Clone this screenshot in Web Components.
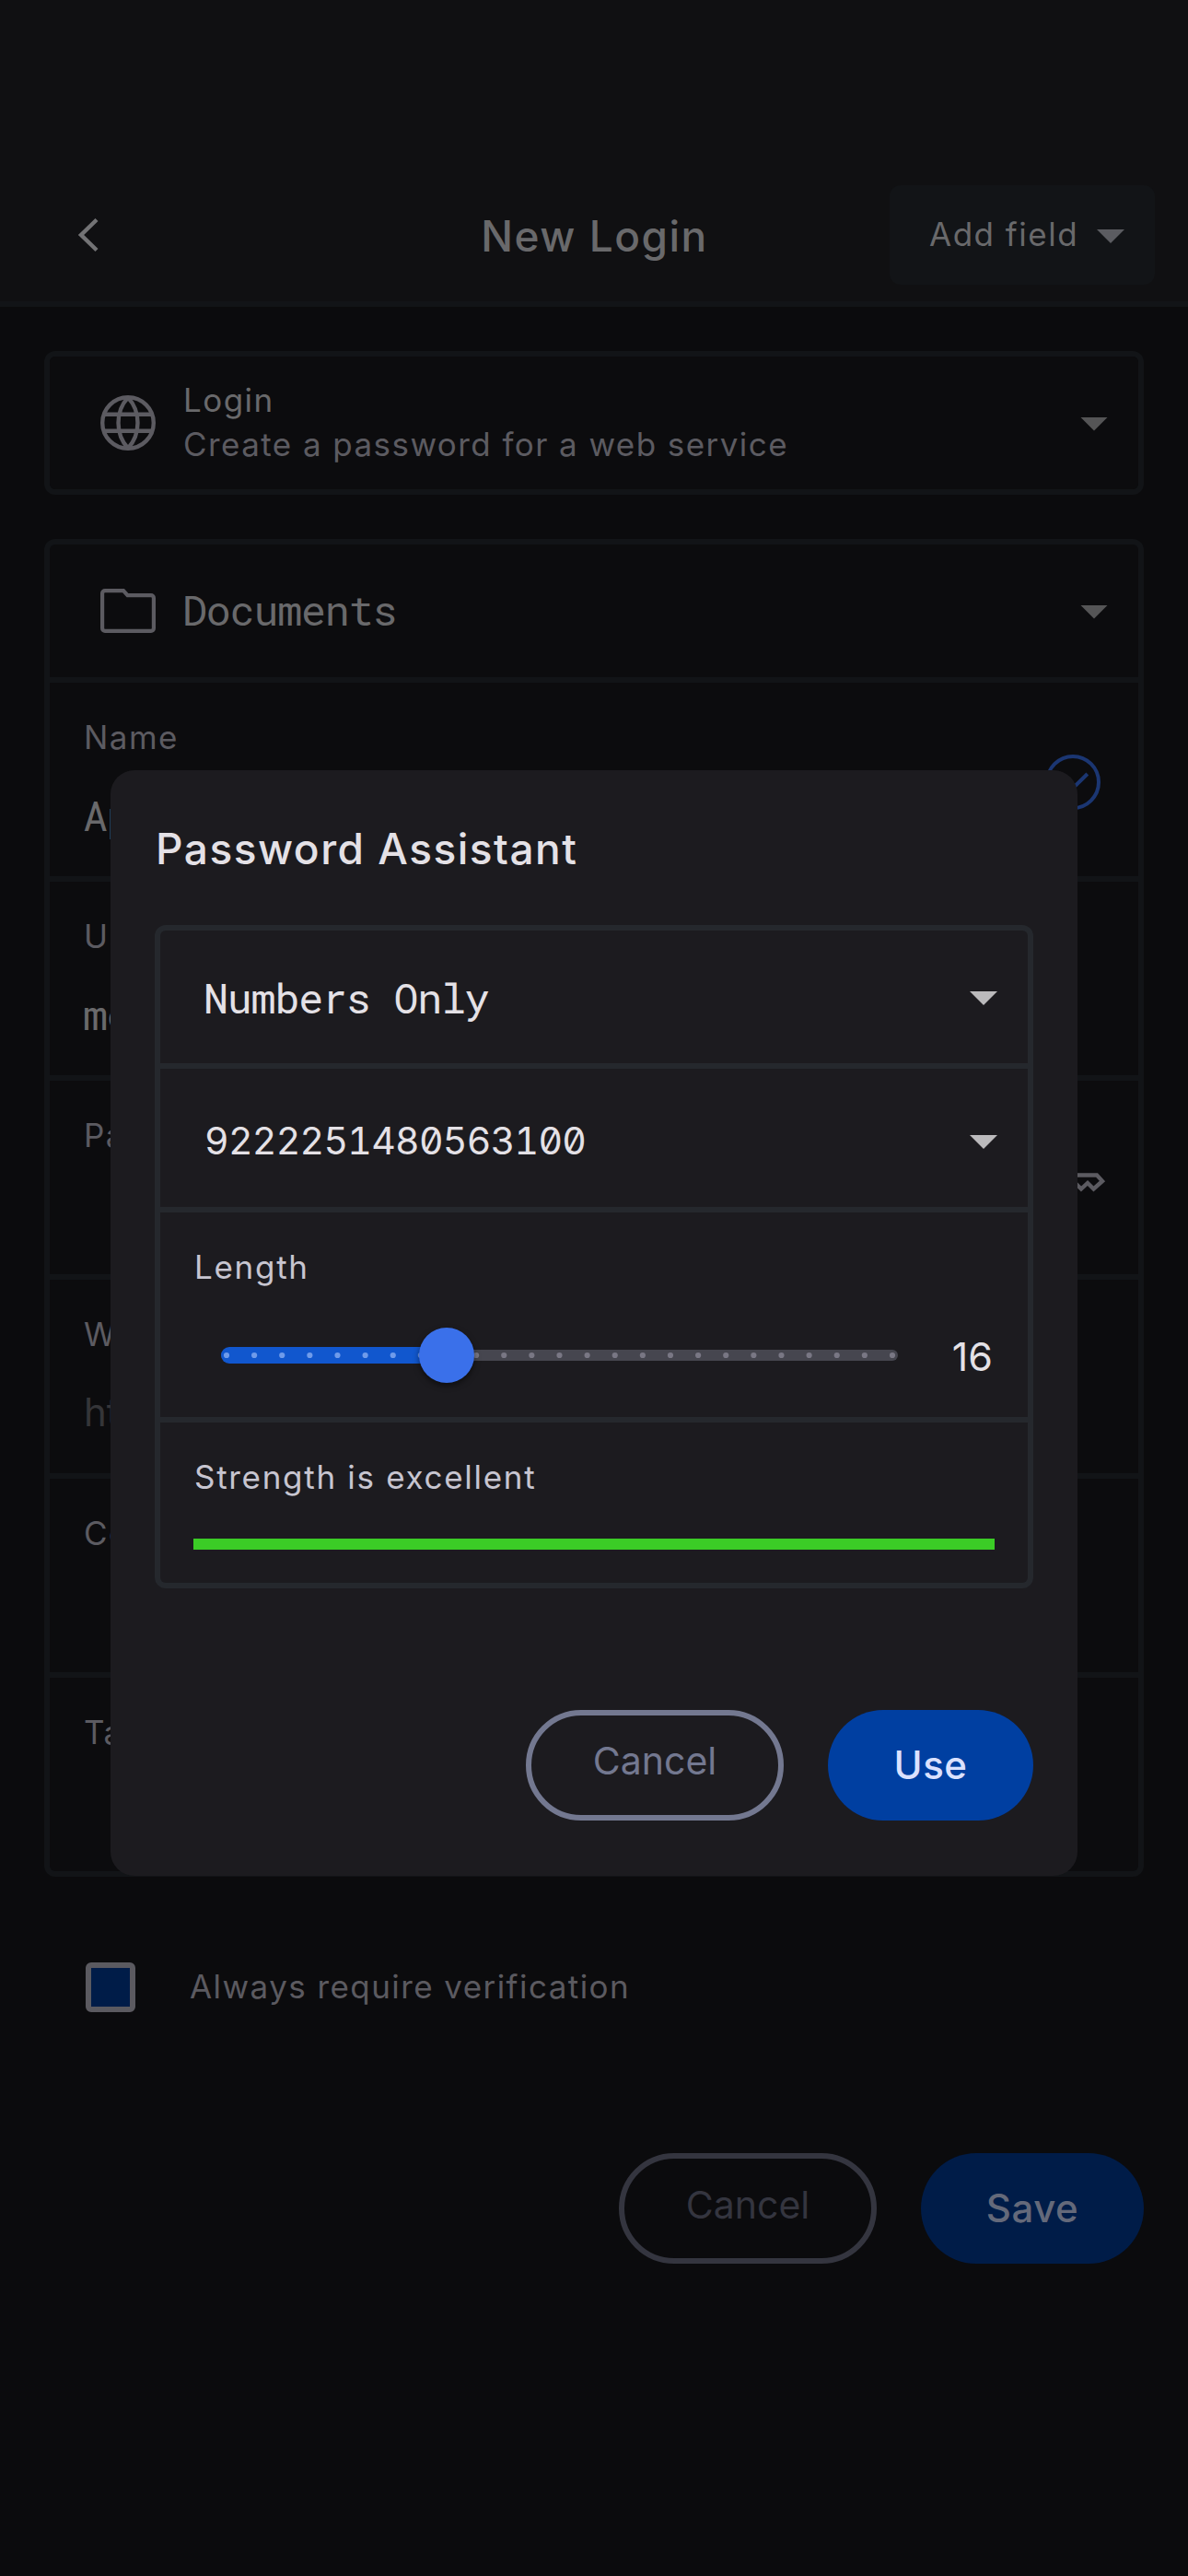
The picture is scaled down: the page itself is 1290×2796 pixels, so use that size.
<!DOCTYPE html>
<html lang="en">
<head>
<meta charset="utf-8">
<title>New Login</title>
<style>
  body {
    margin: 0;
    background: #0b0b0d;
    font-family: Inter, "Liberation Sans", sans-serif;
  }
</style>
</head>
<body>
<login-page></login-page>

<script>
const icons = {
  back: '<svg width="24" height="40" viewBox="0 0 24 40" fill="none" stroke="currentColor" stroke-width="4.4"><path d="M21 3.5 4 20l17 16.5"/></svg>',
  globe: '<svg width="60" height="60" viewBox="0 0 60 60" fill="none" stroke="currentColor" stroke-width="4.4"><circle cx="30" cy="30" r="27.8"/><path d="M4 20.800h52M4 38.800h52M30 2.500c-14 15-14 40 0 55M30 2.500c14 15 14 40 0 55"/></svg>',
  folder: '<svg width="60" height="48" viewBox="0 0 60 48" fill="none" stroke="currentColor" stroke-width="4.2"><path d="M5 2.1h20l4.5 5H55a2.9 2.9 0 0 1 2.9 2.9v33a2.9 2.9 0 0 1-2.9 2.9H5A2.9 2.9 0 0 1 2.1 43V5A2.9 2.9 0 0 1 5 2.1z"/></svg>',
  check: '<svg width="60" height="60" viewBox="0 0 60 60" fill="none" stroke="currentColor" stroke-width="4"><circle cx="30" cy="30" r="28"/><path d="M14 31l10.500 11L45.800 21"/></svg>',
  key: '<svg width="66" height="36" viewBox="0 0 66 36" fill="none" stroke="currentColor" stroke-width="4.4"><circle cx="12" cy="18" r="9"/><path d="M20 11.500h35l6 6.500-9.500 8.500-6.500-6.500-7 6.500-6.500-6.500H20"/></svg>'
};

const define = (name, html) => {
  const template = document.createElement('template');
  template.innerHTML = html;
  customElements.define(name, class extends HTMLElement {
    constructor() {
      super();
      this.attachShadow({ mode: 'open' });
      this.shadowRoot.appendChild(template.content.cloneNode(true));
    }
  });
};

class AppIcon extends HTMLElement {
  constructor() {
    super();
    this.attachShadow({ mode: 'open' });
  }
  connectedCallback() {
    this.shadowRoot.innerHTML = `
      <style>:host { display: block; flex: none; } svg { display: block; }</style>
      ${icons[this.getAttribute('name')]}`;
  }
}
customElements.define('app-icon', AppIcon);

define('drop-caret', /*html*/`
  <style>
    :host { display: block; flex: none; width: 30px; height: 15px; background: currentColor; clip-path: polygon(0 0, 100% 0, 50% 100%); }
  </style>
`);

define('mono-text', /*html*/`
  <style>
    :host {
      display: block;
      font: 45px/60px "Roboto Mono", "Liberation Mono", monospace;
      letter-spacing: -1.2px;
      margin-left: -1px;
      white-space: nowrap;
    }
    :host([digits]) {
      font: 41px/60px Inter, sans-serif;
      font-feature-settings: "tnum", "zero";
      letter-spacing: -0.7px;
      padding-bottom: 2px;
      margin-left: 0;
    }
  </style>
  <slot></slot>
`);

define('small-text', /*html*/`
  <style>
    :host { display: block; font-size: 35px; line-height: 48px; letter-spacing: 1.43px; white-space: nowrap; }
  </style>
  <slot></slot>
`);

define('app-bar', /*html*/`
  <style>
    :host {
      display: grid;
      grid-template-columns: 1fr auto 1fr;
      align-items: center;
      height: 144px;
      padding: 183px 36px 0 84px;
      border-bottom: 6px solid #121417;
      background: #101012;
      color: #69696b;
    }
    h1 { margin: 0; font-size: 46px; font-weight: 500; line-height: 60px; letter-spacing: 1.5px; padding: 2px 47px 0 0; }
    .end { justify-self: end; }
    app-icon { color: #737375; }
  </style>
  <app-icon name="back"></app-icon>
  <h1><slot></slot></h1>
  <div class="end"><slot name="end"></slot></div>
`);

define('menu-button', /*html*/`
  <style>
    :host {
      display: flex;
      align-items: center;
      justify-content: space-between;
      box-sizing: border-box;
      width: 288px;
      height: 108px;
      padding: 0 33px 0 43px;
      border-radius: 12px;
      background: #121417;
    }
    small-text { padding-bottom: 3px; letter-spacing: 1.5px; }
    drop-caret { margin-top: 3px; color: #5b5c61; }
  </style>
  <small-text><slot></slot></small-text>
  <drop-caret></drop-caret>
`);

// bordered group, rows are split by the border colour
define('row-group', /*html*/`
  <style>
    :host {
      display: flex;
      flex-direction: column;
      gap: 6px;
      border: 6px solid var(--line);
      border-radius: 12px;
      background: var(--line);
      overflow: hidden;
    }
    ::slotted(*) { background: var(--fill); }
  </style>
  <slot></slot>
`);

define('select-row', /*html*/`
  <style>
    :host { display: flex; align-items: center; box-sizing: border-box; height: 144px; padding: 0 33px 0 55px; color: #5c5b61; }
    .text { flex: 1; margin: -2px 0 0 30px; }
    drop-caret { margin-top: 2px; color: var(--caret, #555556); }
    :host([plain]) { padding: 2px 33px 0 48px; color: inherit; }
    :host([plain]) .text { margin: 0; }
  </style>
  <slot name="icon"></slot>
  <div class="text"><slot></slot></div>
  <drop-caret></drop-caret>
`);

define('field-row', /*html*/`
  <style>
    :host { display: flex; align-items: center; justify-content: space-between; height: 210px; color: #5c5b61; }
    .text { align-self: flex-start; padding: 35px 0 0 37px; }
    .value { margin-top: 31px; color: #69696b; font-size: 42px; line-height: 60px; }
  </style>
  <div class="text">
    <small-text><slot name="label"></slot></small-text>
    <div class="value"><slot></slot></div>
  </div>
  <slot name="icon"></slot>
`);

define('check-line', /*html*/`
  <style>
    :host { display: flex; align-items: center; gap: 59px; height: 54px; padding-left: 45px; color: #5b5a60; }
    .box { box-sizing: border-box; width: 54px; height: 54px; border: 6px solid #5b5a60; border-radius: 6px; background: #001c48; }
    small-text { padding-bottom: 2px; }
  </style>
  <div class="box"></div>
  <small-text><slot></slot></small-text>
`);

define('pill-button', /*html*/`
  <style>
    :host {
      display: flex;
      align-items: center;
      justify-content: center;
      box-sizing: border-box;
      height: 120px;
      border-radius: 60px;
      font-size: 42px;
      font-weight: 500;
      line-height: 60px;
      letter-spacing: 0.5px;
    }
    :host([outline]) { width: 280px; padding: 0 0 9px; border: 6px solid; font-size: 41px; font-weight: 400; letter-spacing: 0; }
  </style>
  <slot></slot>
`);

class LengthSlider extends HTMLElement {
  constructor() {
    super();
    this.attachShadow({ mode: 'open' });
  }

  connectedCallback() {
    const min = parseInt(this.getAttribute('min'), 10);
    const max = parseInt(this.getAttribute('max'), 10);
    const value = parseInt(this.getAttribute('value'), 10);
    const width = 735;
    const x = width * (value - min) / (max - min);
    let ticks = '';
    for (let i = min; i <= max; i++) {
      const cx = 6 + (width - 12) * (i - min) / (max - min);
      ticks += `<circle cx="${cx}" cy="36" r="3.1" fill="${i < value ? '#6f9bea' : '#797784'}"/>`;
    }
    this.shadowRoot.innerHTML = /*html*/`
      <style>
        :host { display: flex; align-items: center; justify-content: space-between; }
        svg { display: block; overflow: visible; }
        .thumb { filter: drop-shadow(0 3px 3px rgba(0, 0, 0, .5)); }
        span { padding-top: 2px; font-size: 43px; line-height: 60px; color: #e4e1e6; }
      </style>
      <svg width="${width}" height="72">
        <rect y="30" width="${width}" height="12" rx="6" fill="#46464f"/>
        <rect y="27" width="${x}" height="18" rx="9" fill="#1157ce"/>
        ${ticks}
        <circle class="thumb" cx="${x}" cy="36" r="30" fill="#3a70ea"/>
      </svg>
      <span>${value}</span>
    `;
  }
}
customElements.define('length-slider', LengthSlider);

define('password-assistant', /*html*/`
  <style>
    :host {
      --line: #25282d;
      --fill: #1c1b1f;
      --caret: #bbbabc;
      display: block;
      box-sizing: border-box;
      width: 1050px;
      height: 1200px;
      padding: 54px 48px 0;
      border-radius: 26px;
      background: #1c1b1f;
      color: #e4e1e6;
    }
    h2 { margin: 0 0 53px; padding-top: 1px; font-size: 46px; font-weight: 500; line-height: 60px; letter-spacing: 1.5px; text-indent: 1px; }
    .second { height: 150px; padding-top: 8px; }
    .length { height: 222px; padding: 0 38px 0 36px; box-sizing: border-box; }
    .strength { height: 174px; padding: 0 36px; box-sizing: border-box; }
    small-text { color: #c7c5d0; padding: 35px 0 0 1px; letter-spacing: 1.7px; }
    length-slider { margin: 36px 0 0 30px; }
    .bar { height: 12px; margin-top: 43px; background: #3bcc26; }
    .actions { display: flex; justify-content: flex-end; gap: 48px; margin-top: 132px; }
    .cancel { color: #737890; }
    .use { width: 223px; background: #003fa1; color: #dbe1ff; }
  </style>
  <h2>Password Assistant</h2>
  <row-group>
    <select-row plain><mono-text>Numbers Only</mono-text></select-row>
    <select-row plain class="second"><mono-text digits>9222251480563100</mono-text></select-row>
    <div class="length">
      <small-text>Length</small-text>
      <length-slider min="8" max="32" value="16"></length-slider>
    </div>
    <div class="strength">
      <small-text>Strength is excellent</small-text>
      <div class="bar"></div>
    </div>
  </row-group>
  <div class="actions">
    <pill-button outline class="cancel">Cancel</pill-button>
    <pill-button class="use">Use</pill-button>
  </div>
`);

define('login-page', /*html*/`
  <style>
    :host {
      --line: #121417;
      --fill: #0c0c0e;
      display: block;
      position: relative;
      width: 1290px;
      height: 2796px;
      overflow: hidden;
    }
    main { display: flex; flex-direction: column; gap: 48px; padding: 48px; }
    .bright { color: #69696b; }
    .checkicon { color: #1b3672; margin: 5px 41px 0 0; }
    .keyicon { margin: 8px 34px 0 0; }
    .hint { color: #353538; }
    check-line { margin-top: 45px; }
    .actions { display: flex; justify-content: flex-end; gap: 48px; margin-top: 105px; }
    .cancel { color: #34353f; }
    .save { width: 242px; background: #001c48; color: #64697a; }
    password-assistant { position: absolute; left: 120px; top: 835.5px; }
  </style>
  <app-bar>New Login<menu-button slot="end">Add field</menu-button></app-bar>
  <main>
    <row-group>
      <select-row>
        <app-icon slot="icon" name="globe"></app-icon>
        <small-text class="bright">Login</small-text>
        <small-text>Create a password for a web service</small-text>
      </select-row>
    </row-group>
    <row-group>
      <select-row>
        <app-icon slot="icon" name="folder"></app-icon>
        <mono-text class="bright">Documents</mono-text>
      </select-row>
      <field-row>
        <span slot="label">Name</span>
        <mono-text>Ap</mono-text>
        <app-icon class="checkicon" slot="icon" name="check"></app-icon>
      </field-row>
      <field-row><span slot="label">Username</span><mono-text>me</mono-text></field-row>
      <field-row><span slot="label">Password</span><app-icon class="keyicon" slot="icon" name="key"></app-icon></field-row>
      <field-row><span slot="label">Website</span><span class="hint">https://</span></field-row>
      <field-row><span slot="label">Comments</span></field-row>
      <field-row><span slot="label">Tags</span></field-row>
    </row-group>
    <check-line>Always require verification</check-line>
    <div class="actions">
      <pill-button outline class="cancel">Cancel</pill-button>
      <pill-button class="save">Save</pill-button>
    </div>
  </main>
  <password-assistant></password-assistant>
`);
</script>
</body>
</html>
